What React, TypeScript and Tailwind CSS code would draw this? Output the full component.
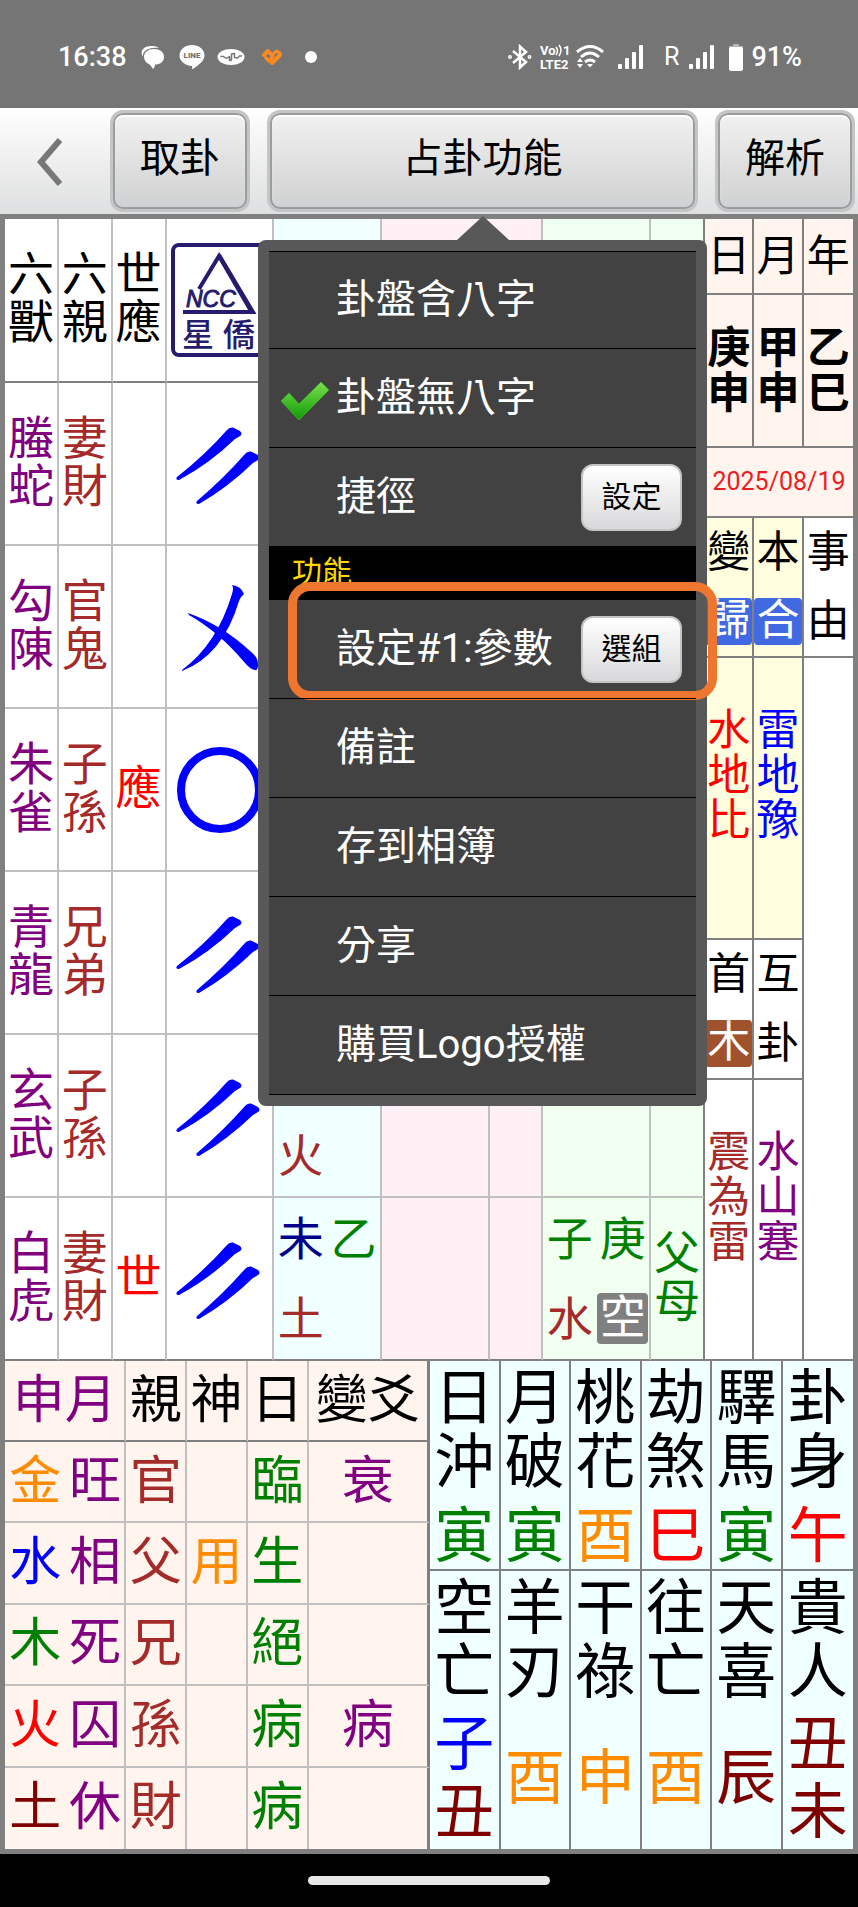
import React from 'react';
import { clsx } from 'clsx';

type Glyph = { text: string; color?: string };

const beasts = [
  { beast: '螣蛇', kin: '妻財', mark: '', line: 'yin' },
  { beast: '勾陳', kin: '官鬼', mark: '', line: 'cross' },
  { beast: '朱雀', kin: '子孫', mark: '應', line: 'circle' },
  { beast: '青龍', kin: '兄弟', mark: '', line: 'yin' },
  { beast: '玄武', kin: '子孫', mark: '', line: 'yin' },
  { beast: '白虎', kin: '妻財', mark: '世', line: 'yin' },
];

const strengths = [
  { element: '金', color: 'text-[#ff8c00]', state: '旺', kin: '官', god: '', day: '臨', change: '衰' },
  { element: '水', color: 'text-[#0000ff]', state: '相', kin: '父', god: '用', day: '生', change: '' },
  { element: '木', color: 'text-[#008000]', state: '死', kin: '兄', god: '', day: '絕', change: '' },
  { element: '火', color: 'text-[#ff0000]', state: '囚', kin: '孫', god: '', day: '病', change: '病' },
  { element: '土', color: 'text-[#800000]', state: '休', kin: '財', god: '', day: '病', change: '' },
];

const green = 'text-[#008000]';
const orange = 'text-[#ff8c00]';
const maroon = 'text-[#800000]';

const upperStars: { name: string; values: Glyph[] }[] = [
  { name: '日沖', values: [{ text: '寅', color: green }] },
  { name: '月破', values: [{ text: '寅', color: green }] },
  { name: '桃花', values: [{ text: '酉', color: orange }] },
  { name: '劫煞', values: [{ text: '巳', color: 'text-[#ff0000]' }] },
  { name: '驛馬', values: [{ text: '寅', color: green }] },
  { name: '卦身', values: [{ text: '午', color: 'text-[#ff0000]' }] },
];

const lowerStars: { name: string; values: Glyph[] }[] = [
  { name: '空亡', values: [{ text: '子', color: 'text-[#0000ff]' }, { text: '丑', color: maroon }] },
  { name: '羊刃', values: [{ text: '酉', color: orange }] },
  { name: '干祿', values: [{ text: '申', color: orange }] },
  { name: '往亡', values: [{ text: '酉', color: orange }] },
  { name: '天喜', values: [{ text: '辰', color: maroon }] },
  { name: '貴人', values: [{ text: '丑', color: maroon }, { text: '未', color: maroon }] },
];

/* Text that wraps after every character, so it reads downwards */
const Stack: React.FC<{ text: string; className?: string }> = ({ text, className }) => (
  <span className={clsx('mx-auto block w-[1em] break-all', className)}>{text}</span>
);

const SignalBars: React.FC<{ className?: string }> = ({ className }) => (
  <svg viewBox="0 0 26 24" fill="currentColor" className={clsx('w-[26px] h-6', className)}>
    <rect x="0" y="19" width="4" height="5" rx="1" />
    <rect x="7" y="13" width="4" height="11" rx="1" />
    <rect x="14" y="7" width="4" height="17" rx="1" />
    <rect x="21" y="0" width="4" height="24" rx="1" />
  </svg>
);

const StatusBar = () => (
  <header className="flex h-[108px] items-center bg-[#757575] pl-[58px] pr-14 pt-1.5 text-white">
    <span className="text-[27px] leading-8 font-medium">16:38</span>
    <svg viewBox="0 0 24 24" className="ml-3.5 h-6 w-6" fill="#fff">
      <path d="M2 12C-2 6 3 1 10 1c5 0 7 1 8 2C9 2 1 5 2 12Z" />
      <path d="M13 4c6 0 10 3 10 8s-4 7.500-9 7.500c0 2-1 3.500-2 4.500-1-2-2-3-4-5-3-1-5-4-5-7 0-5 4-8 10-8Z" />
    </svg>
    <svg viewBox="0 0 26 26" className="ml-3.5 h-[26px] w-[26px]">
      <path d="M13 1c7 0 12.500 4.500 12.500 10.500 0 5-5 9-11.500 13.500-1 .5-1-.5-.8-3C6 21.500.500 17.500.500 11.500.500 5.500 6 1 13 1Z" fill="#fff" />
      <text x="13" y="14" textAnchor="middle" className="fill-[#757575] text-[8px] font-black">LINE</text>
    </svg>
    <svg viewBox="0 0 28 18" className="ml-3 h-[18px] w-7">
      <ellipse cx="14" cy="9" rx="13.500" ry="8" fill="#fff" />
      <path d="M3.500 8.500h3l3 2 3-2v4l2-.5V6l3-.5v4l3 .5 2-2h2.500" fill="none" stroke="#757575" strokeWidth="1.500" strokeLinejoin="round" />
    </svg>
    <svg viewBox="0 0 22 18" className="ml-4 h-[18px] w-[22px]" fill="none" stroke="#ff8a1f" strokeWidth="4" strokeLinecap="round" strokeLinejoin="round">
      <path d="m3 7 4-4" />
      <path d="m5 10 3 3 4-5-4-4" strokeWidth="3.500" />
      <path d="m11 15 8-8" />
      <path d="m13 5 3-2 3 2" strokeWidth="3" />
    </svg>
    <span className="ml-[22px] h-3 w-3 rounded-full bg-white" />

    <svg viewBox="0 0 24 26" className="ml-auto h-[26px] w-6" fill="none" stroke="#fff" strokeWidth="2.500">
      <path d="m5 7 13 11-6 5.500v-21L18 8 5 19" />
      <circle cx="2" cy="13" r=".7" />
      <circle cx="21.500" cy="13" r=".7" />
    </svg>
    <svg viewBox="0 0 30 26" className="ml-2 h-[26px] w-[30px] overflow-visible fill-white font-bold">
      <text x="0" y="11" className="text-[13px]">Vo</text>
      <path d="M16 3q3 4 0 8M19 1q4 5 0 11" fill="none" stroke="#fff" strokeWidth="1.500" />
      <text x="23" y="11" className="text-[13px]">1</text>
      <text x="0" y="25" className="text-[13px]">LTE2</text>
    </svg>
    <svg viewBox="0 0 28 26" className="ml-1.5 h-[26px] w-7" fill="none" stroke="#fff" strokeWidth="3">
      <path d="M1 8q13-11 26 0M5 13q9-8 18 0M9 18q5-4 10 0" />
      <path d="m11 20 6 0-3 3.500ZM1 18l3-4 3 4ZM1 20l3 4 3-4Z" fill="#fff" stroke="none" />
    </svg>
    <SignalBars className="ml-3.5" />
    <span className="ml-5 text-[25px] leading-8">R</span>
    <SignalBars className="ml-2.5" />
    <svg viewBox="0 0 14 28" className="ml-3.5 h-7 w-3.5">
      <path d="M4 1h6v2h4v4H0V3h4Z" fill="#b5b5b5" />
      <rect x="0" y="4" width="14" height="24" rx="2" fill="#fff" />
    </svg>
    <span className="ml-2 text-[27px] leading-8 font-medium">91%</span>
  </header>
);

const barButton =
  'h-[96px] w-full rounded-[10px] border-2 border-[#9a9c9d] bg-linear-to-b from-[#f1f1f1] to-[#d0d1d2] pb-1 text-[40px] leading-[48px] text-black shadow-[0_0_0_3px_#c4c5c6,inset_0_2px_1px_#fff]';

const SmallButton: React.FC<{ children: React.ReactNode }> = ({ children }) => (
  <button className="mr-3.5 ml-auto h-[67px] w-[101px] rounded-xl border-2 border-[#c4c4c4] bg-linear-to-b from-white to-[#d9d9db] text-[30px] leading-9 text-black">
    {children}
  </button>
);

const CheckMark = () => (
  <svg viewBox="0 0 50 40" className="absolute left-[11px] top-8 h-10 w-[50px]">
    <defs>
      <linearGradient id="check" x1="0" y1="0" x2="0" y2="1">
        <stop offset="0" stopColor="#7be04c" />
        <stop offset="1" stopColor="#109a08" />
      </linearGradient>
    </defs>
    <path d="M1 20 9 12l10 11L41 1l8 8-30 30Z" fill="url(#check)" stroke="#3fae25" strokeLinejoin="round" />
  </svg>
);

const itemClass = 'relative flex items-center border-black pl-[67px] text-[40px] leading-[48px]';

const FunctionMenu = () => (
  <div className="absolute -left-3 -right-3 top-[127px] z-10 rounded-lg bg-[#585858] p-[11px] text-white">
    <svg viewBox="0 0 52 24" className="absolute -top-6 left-1/2 h-6 w-[52px] -translate-x-1/2">
      <path d="M26 0 52 24H0Z" fill="#585858" />
    </svg>
    <ul className="border-b border-black bg-[#424242]">
      <li className={clsx(itemClass, 'h-[97px] border-t')}>
        <button>卦盤含八字</button>
      </li>
      <li className={clsx(itemClass, 'h-[99px] border-t')}>
        <CheckMark />
        <button>卦盤無八字</button>
      </li>
      <li className={clsx(itemClass, 'h-[99px] border-t')}>
        <span>捷徑</span>
        <SmallButton>設定</SmallButton>
      </li>
      <li className="h-[54px] bg-black pl-[23px] pt-2 text-[30px] leading-9 text-[#ffd700]">功能</li>
      <li className={clsx(itemClass, 'h-[98px]')}>
        <span>設定#1:參數</span>
        <SmallButton>選組</SmallButton>
        <span className="pointer-events-none absolute -right-[21px] -top-[18px] -bottom-0.5 left-[19px] rounded-[22px] border-[9px] border-[#ee762f]" />
      </li>
      {['備註', '存到相簿', '分享', '購買Logo授權'].map((label) => (
        <li key={label} className={clsx(itemClass, 'h-[99px] border-t')}>
          <button>{label}</button>
        </li>
      ))}
    </ul>
  </div>
);

const Toolbar = () => (
  <nav className="flex h-[106px] gap-[23px] bg-linear-to-b from-white to-[#dedfe0] pr-1.5 pt-[5px]">
    <div className="flex flex-none">
      <button aria-label="返回" className="flex w-[113px] items-center pb-1 pl-[37px]">
        <svg viewBox="0 0 26 48" className="h-12 w-[26px]" fill="none" stroke="#777" strokeWidth="6">
          <path d="M23 2 4 24l19 22" />
        </svg>
      </button>
      <div className="w-[134px]">
        <button className={barButton}>取卦</button>
      </div>
    </div>
    <div className="relative flex-1">
      <button className={barButton}>占卦功能</button>
      <FunctionMenu />
    </div>
    <div className="w-[134px] flex-none">
      <button className={barButton}>解析</button>
    </div>
  </nav>
);

const Logo = () => (
  <svg viewBox="0 0 96 114" className="mx-auto h-[114px] w-24">
    <rect x="2" y="2" width="92" height="110" rx="6" fill="none" stroke="#251c6e" strokeWidth="4" />
    <path d="M28 46 48 13l32 55" fill="none" stroke="#251c6e" strokeWidth="4" />
    <path d="M48 12 82 69H12" fill="none" stroke="#251c6e" strokeWidth="4" />
    <text x="15" y="64" className="fill-[#251c6e] stroke-[#251c6e] font-['Liberation_Sans'] text-[23px] italic">NCC</text>
    <text x="11" y="103" className="fill-[#251c6e] text-[32px] font-medium">星</text>
    <text x="52" y="103" className="fill-[#251c6e] text-[32px] font-medium">僑</text>
  </svg>
);

const YaoLine: React.FC<{ kind: string }> = ({ kind }) => (
  <svg viewBox="0 0 106 160" className="mx-auto h-40 w-[106px]" fill="#00f">
    {kind === 'yin' && (
      <>
        <path d="M10 93Q38 71 60 46 62 43 66 43.500L73 47Q76 50 73 52L68 55Q42 80 12 96 8 96 10 93Z" />
        <path d="M30 117Q56 95 78 70 80 67 84 67.500L91 71Q94 74 91 76L86 79Q60 104 32 120 28 120 30 117Z" />
      </>
    )}
    {kind === 'cross' && (
      <>
        <path d="M65 38q9 1 12 9-4 3-5 7-16 54-57 70l0-1Q50 97 65 47q2-6 0-9Z" />
        <path d="M21 66q34 12 62 38 8 6 8 13 0 7-3 6-4 0-10-7Q52 85 22 68Z" />
      </>
    )}
    {kind === 'circle' && <circle cx="53" cy="80" r="39" fill="none" stroke="#00f" strokeWidth="8" />}
  </svg>
);

const cell = 'border-r-2 border-b-2 border-[#c0c0c0] p-0';

const HexagramTable = () => (
  <table className="w-full table-fixed border-separate border-spacing-0 text-[46px] leading-[48px]">
    <colgroup>
      <col className="w-1/13" />
      <col className="w-1/13" />
      <col className="w-1/13" />
      <col className="w-2/13" />
      <col className="w-2/13" />
      <col className="w-2/13" />
      <col className="w-1/13" />
      <col className="w-2/13" />
      <col className="w-1/13" />
    </colgroup>
    <thead>
      <tr className="h-[164px]">
        {['六獸', '六親', '世應'].map((title) => (
          <th key={title} className="border-r-2 border-b-2 border-r-[#c0c0c0] border-b-[#808080] bg-white p-0 pb-1 font-normal">
            <Stack text={title} />
          </th>
        ))}
        <th className="border-r-2 border-b-2 border-r-[#c0c0c0] border-b-[#808080] bg-white p-0 font-normal"><Logo /></th>
        <th className="border-r-2 border-b-2 border-r-[#c0c0c0] border-b-[#808080] bg-[#f0ffff] p-0" />
        <th colSpan={2} className="border-r-2 border-b-2 border-r-[#c0c0c0] border-b-[#808080] bg-[#fff0f5] p-0" />
        <th className="border-r-2 border-b-2 border-r-[#c0c0c0] border-b-[#808080] bg-[#f0fff0] p-0" />
        <th className="border-r-2 border-b-2 border-[#808080] bg-[#f0fff0] p-0" />
      </tr>
    </thead>
    <tbody>
      {beasts.map((row, i) => {
        const last = i === beasts.length - 1;
        const edge = last && 'border-b-[#808080]';
        return (
          <tr key={i} className="h-[163px]">
            <td className={clsx(cell, edge, 'bg-white text-[#800080]')}><Stack text={row.beast} className="pb-1" /></td>
            <td className={clsx(cell, edge, 'bg-white text-[#a52a2a]')}><Stack text={row.kin} className="pb-1" /></td>
            <td className={clsx(cell, edge, 'bg-white text-[#ff0000]')}><Stack text={row.mark} className="pb-1" /></td>
            <td className={clsx(cell, edge, 'bg-white')}><YaoLine kind={row.line} /></td>
            <td className={clsx(cell, edge, 'bg-[#f0ffff]')}>
              {i >= 4 && (
                <div className="grid grid-cols-2 grid-rows-[80px_80px] items-center text-center">
                  <span className="text-[#00008b]">{last ? '未' : ''}</span>
                  <span className="text-[#008000]">{last ? '乙' : ''}</span>
                  <span className="text-[#a52a2a]">{last ? '土' : '火'}</span>
                </div>
              )}
            </td>
            <td className={clsx(cell, edge, 'bg-[#fff0f5]')} />
            <td className={clsx(cell, edge, 'bg-[#fff0f5]')} />
            <td className={clsx(cell, edge, 'bg-[#f0fff0]')}>
              {last && (
                <div className="grid grid-cols-2 grid-rows-[80px_80px] items-center text-center">
                  <span className="text-[#008000]">子</span>
                  <span className="text-[#008000]">庚</span>
                  <span className="text-[#a52a2a]">水</span>
                  <span className="mx-px h-[51px] rounded bg-[#808080] leading-[48px] text-white">空</span>
                </div>
              )}
            </td>
            <td className={clsx(cell, edge, 'border-r-[#808080] bg-[#f0fff0] text-[#008000]')}>
              {last && <Stack text="父母" className="pb-1" />}
            </td>
          </tr>
        );
      })}
    </tbody>
  </table>
);

const dark = 'border-b-2 border-[#808080] p-0 font-normal';

const DateTable = () => (
  <table className="w-full table-fixed border-separate border-spacing-0 text-[43px] leading-[45px]">
    <tbody>
      <tr className="h-[76px]">
        {['日', '月', '年'].map((title) => (
          <th key={title} className={clsx(dark, 'border-r-2 bg-[#fff5ee] last:border-r-0')}><Stack text={title} /></th>
        ))}
      </tr>
      <tr className="h-[153px]">
        {['庚申', '甲申', '乙巳'].map((pillar) => (
          <td key={pillar} className="border-r-2 border-b-2 border-[#808080] bg-[#fff5ee] p-0 font-bold last:border-r-0">
            <Stack text={pillar} />
          </td>
        ))}
      </tr>
      <tr className="h-[70px]">
        <td colSpan={3} className={clsx(dark, 'bg-[#fff5ee] text-center text-[25px] leading-8 text-[#ed1c24]')}>2025/08/19</td>
      </tr>
      <tr className="h-[140px]">
        {[['變', '歸'], ['本', '合']].map(([title, tag]) => (
          <td key={title} className={clsx(dark, 'border-r-2 bg-[#ffffe0] text-center')}>
            <div className="grid grid-rows-[69px_69px] items-center">
              <span>{title}</span>
              <span className="h-[47px] rounded-sm bg-[#4169e1] leading-[45px] text-white">{tag}</span>
            </div>
          </td>
        ))}
        <td className={clsx(dark, 'bg-white text-center')}>
          <div className="grid grid-rows-[69px_69px] items-center">
            <span>事</span>
            <span>由</span>
          </div>
        </td>
      </tr>
      <tr className="h-[282px]">
        <td className={clsx(dark, 'border-r-2 bg-[#ffffe0] text-[#ff0000]')}><Stack text="水地比" className="pb-[45px]" /></td>
        <td className={clsx(dark, 'border-r-2 bg-[#ffffe0] text-[#0000ff]')}><Stack text="雷地豫" className="pb-[45px]" /></td>
        <td rowSpan={3} className={clsx(dark, 'bg-white')} />
      </tr>
      <tr className="h-[140px]">
        <td className={clsx(dark, 'border-r-2 bg-white text-center')}>
          <div className="grid grid-rows-[69px_69px] items-center">
            <span>首</span>
            <span className="h-[47px] rounded-sm bg-[#a0522d] leading-[45px] text-white">木</span>
          </div>
        </td>
        <td className={clsx(dark, 'border-r-2 bg-white text-center')}>
          <div className="grid grid-rows-[69px_69px] items-center">
            <span>互</span>
            <span>卦</span>
          </div>
        </td>
      </tr>
      <tr className="h-[281px]">
        <td className={clsx(dark, 'border-r-2 bg-white text-[#a52a2a]')}><Stack text="震為雷" className="pb-[45px]" /></td>
        <td className={clsx(dark, 'border-r-2 bg-white text-[#800080]')}><Stack text="水山蹇" className="pb-[45px]" /></td>
      </tr>
    </tbody>
  </table>
);

const StrengthTable = () => (
  <table className="h-full w-full table-fixed border-separate border-spacing-0 bg-[#fff5ee] text-center text-[52px] leading-[60px]">
    <colgroup>
      <col className="w-1/7" />
      <col className="w-1/7" />
      <col className="w-1/7" />
      <col className="w-1/7" />
      <col className="w-1/7" />
      <col className="w-2/7" />
    </colgroup>
    <thead>
      <tr className="h-[81px]">
        <th colSpan={2} className="border-r-2 border-b-2 border-r-[#c0c0c0] border-b-[#808080] p-0 font-normal text-[#800080]">申月</th>
        {['親', '神', '日'].map((title) => (
          <th key={title} className="border-r-2 border-b-2 border-r-[#c0c0c0] border-b-[#808080] p-0 font-normal">{title}</th>
        ))}
        <th className="border-r-3 border-b-2 border-[#808080] p-0 font-normal">變爻</th>
      </tr>
    </thead>
    <tbody>
      {strengths.map((row) => (
        <tr key={row.element} className="h-[81px] *:border-b-2 *:border-b-[#c0c0c0] *:p-0 last:*:border-b-0">
          <td className={row.color}>{row.element}</td>
          <td className="border-r-2 border-r-[#c0c0c0] text-[#800080]">{row.state}</td>
          <td className="border-r-2 border-r-[#c0c0c0] text-[#a52a2a]">{row.kin}</td>
          <td className="border-r-2 border-r-[#c0c0c0] text-[#ff8c00]">{row.god}</td>
          <td className="border-r-2 border-r-[#c0c0c0] text-[#008000]">{row.day}</td>
          <td className="border-r-3 border-r-[#808080] text-[#800080]">{row.change}</td>
        </tr>
      ))}
    </tbody>
  </table>
);

const StarsTable = () => (
  <table className="w-full table-fixed border-separate border-spacing-0 bg-[#f0ffff] text-[60px] leading-[64px]">
    <tbody>
      <tr className="h-[210px]">
        {upperStars.map((star) => (
          <td key={star.name} className="border-r-2 border-b-2 border-[#808080] p-0 pt-1.5 align-top last:border-r-0">
            <Stack text={star.name} />
            {star.values.map((value) => (
              <Stack key={value.text} text={value.text} className={clsx('pt-2.5', value.color)} />
            ))}
          </td>
        ))}
      </tr>
      <tr className="h-[278px]">
        {lowerStars.map((star) => (
          <td key={star.name} className="border-r-2 border-[#808080] p-0 pt-1.5 align-top last:border-r-0">
            <Stack text={star.name} />
            <div className="flex h-[144px] flex-col justify-center pt-1 leading-[68px]">
              {star.values.map((value) => (
                <Stack key={value.text} text={value.text} className={value.color} />
              ))}
            </div>
          </td>
        ))}
      </tr>
    </tbody>
  </table>
);

export default function App() {
  return (
    <div className="min-h-screen bg-black font-['Roboto','Noto_Sans_CJK_TC',sans-serif] text-black" lang="zh-Hant">
      <StatusBar />
      <Toolbar />
      <main className="border-[5px] border-[#808080]">
        <div className="grid grid-cols-[700fr_148fr]">
          <HexagramTable />
          <DateTable />
        </div>
        <div className="grid grid-cols-[425fr_423fr]">
          <StrengthTable />
          <StarsTable />
        </div>
      </main>
      <footer className="flex h-[53px] justify-center pt-[22px]">
        <span className="h-[9px] w-[242px] rounded-full bg-[#e8e8e8]" />
      </footer>
    </div>
  );
}
